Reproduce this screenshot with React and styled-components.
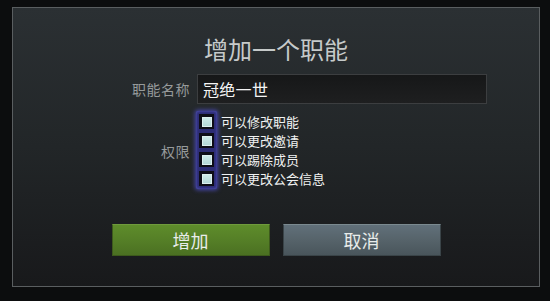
import React from "react";
import styled, { createGlobalStyle } from "styled-components";

const Global = createGlobalStyle`
  html, body { margin: 0; padding: 0; background: #0c0d0e; }
  body { font-family: "Noto Sans CJK SC", "Noto Sans", sans-serif; }
`;

const Page = styled.div`
  width: 550px;
  height: 301px;
  padding: 7px 10px 0 12px;
  box-sizing: border-box;
  background: #0c0d0e;
`;

const Dialog = styled.div`
  width: 528px;
  height: 280px;
  box-sizing: border-box;
  border: 1px solid #5a5e60;
  background: linear-gradient(180deg, #2b3033 0%, #222628 50%, #18191b 100%);
  display: flex;
  flex-direction: column;
  align-items: stretch;
  padding-top: 27px;
`;

const Title = styled.h1`
  margin: 0;
  font-size: 24px;
  line-height: 28px;
  font-weight: 400;
  color: #c6caca;
  text-align: center;
`;

const Form = styled.div`
  display: grid;
  grid-template-columns: 177px 290px;
  column-gap: 7px;
  row-gap: 7px;
  margin-top: 11px;
  align-items: center;
`;

const Label = styled.div`
  text-align: right;
  font-size: 14px;
  color: #969a9b;
  letter-spacing: 0.5px;
`;

const Input = styled.div`
  height: 30px;
  box-sizing: border-box;
  border: 1px solid #3c3e40;
  background: linear-gradient(180deg, #161718 0%, #1e1f20 100%);
  color: #f4f4f4;
  font-size: 16px;
  line-height: 28px;
  padding-left: 5px;
  letter-spacing: 0.3px;
`;

const PermGroup = styled.div`
  display: flex;
  align-items: flex-start;
  margin-left: -1px;
`;

const CheckColumn = styled.div`
  display: flex;
  flex-direction: column;
  gap: 4px;
  padding: 3px 3px;
  background: #2c2c74;
  border-radius: 2px;
  box-shadow: 0 0 4px 1px #4848b0, inset 0 0 3px #5c5cc8;
`;

const Check = styled.div`
  width: 15px;
  height: 15px;
  box-sizing: border-box;
  background: #0e0e18;
  display: flex;
  align-items: center;
  justify-content: center;
  &::after {
    content: "";
    width: 10px;
    height: 10px;
    box-sizing: border-box;
    border: 1px solid #dcf0f0;
    background: linear-gradient(180deg, #cde9e9 0%, #b4d8d8 100%);
  }
`;

const TextColumn = styled.div`
  display: flex;
  flex-direction: column;
  padding-top: 3px;
  margin-left: 4px;
`;

const PermText = styled.div`
  height: 19px;
  line-height: 15px;
  font-size: 13px;
  color: #f0f2f2;
`;

const Buttons = styled.div`
  display: flex;
  justify-content: center;
  gap: 13px;
  margin-top: 34px;
`;

const Button = styled.button`
  width: 158px;
  height: 32px;
  box-sizing: border-box;
  font-family: inherit;
  font-size: 18px;
  color: #e8ecea;
  padding: 0;
  border: 1px solid ${(p) => (p.$primary ? "#3d5a1c" : "#3a4448")};
  border-top-color: ${(p) => (p.$primary ? "#6f9a3c" : "#7b8a90")};
  background: ${(p) =>
    p.$primary
      ? "linear-gradient(180deg, #5e8c2b 0%, #557f27 50%, #4b7022 100%)"
      : "linear-gradient(180deg, #61707a 0%, #56636a 50%, #49555b 100%)"};
  line-height: 30px;
`;

const perms = ["可以修改职能", "可以更改邀请", "可以踢除成员", "可以更改公会信息"];

export default function App() {
  return (
    <Page>
      <Global />
      <Dialog>
        <Title>增加一个职能</Title>
        <Form>
          <Label>职能名称</Label>
          <Input>冠绝一世</Input>
          <Label>权限</Label>
          <PermGroup>
            <CheckColumn>
              {perms.map((p) => (
                <Check key={p} />
              ))}
            </CheckColumn>
            <TextColumn>
              {perms.map((p) => (
                <PermText key={p}>{p}</PermText>
              ))}
            </TextColumn>
          </PermGroup>
        </Form>
        <Buttons>
          <Button $primary>增加</Button>
          <Button>取消</Button>
        </Buttons>
      </Dialog>
    </Page>
  );
}
